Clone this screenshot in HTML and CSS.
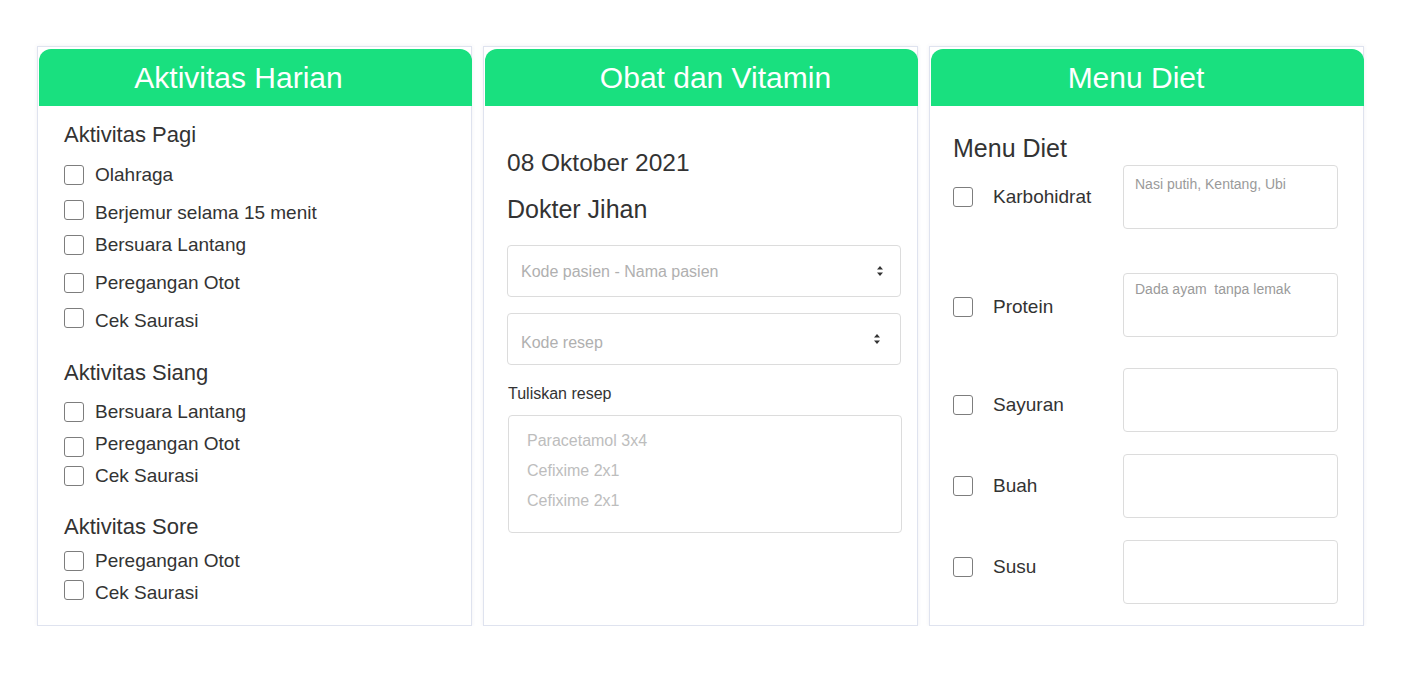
FILE: index.html
```html
<!DOCTYPE html>
<html lang="id">
<head>
<meta charset="utf-8">
<title>Dashboard</title>
<link rel="stylesheet" href="styles.css">
</head>
<body>
<main class="board">
  <section class="card">
    <h2 class="card-title title-left">Aktivitas Harian</h2>
    <div class="card-body body-activity">
      <h3 class="group-title first">Aktivitas Pagi</h3>
      <label class="item m9"><input type="checkbox" class="cb"><span>Olahraga</span></label>
      <label class="item m6"><input type="checkbox" class="cb cb-up"><span>Berjemur selama 15 menit</span></label>
      <label class="item"><input type="checkbox" class="cb"><span>Bersuara Lantang</span></label>
      <label class="item m6"><input type="checkbox" class="cb"><span>Peregangan Otot</span></label>
      <label class="item m6"><input type="checkbox" class="cb cb-up"><span>Cek Saurasi</span></label>

      <h3 class="group-title m21">Aktivitas Siang</h3>
      <label class="item m8"><input type="checkbox" class="cb"><span>Bersuara Lantang</span></label>
      <label class="item"><input type="checkbox" class="cb cb-down"><span>Peregangan Otot</span></label>
      <label class="item"><input type="checkbox" class="cb"><span>Cek Saurasi</span></label>

      <h3 class="group-title m20">Aktivitas Sore</h3>
      <label class="item m3"><input type="checkbox" class="cb"><span>Peregangan Otot</span></label>
      <label class="item"><input type="checkbox" class="cb cb-up"><span>Cek Saurasi</span></label>
    </div>
  </section>

  <section class="card">
    <h2 class="card-title title-mid">Obat dan Vitamin</h2>
    <div class="card-body body-med">
      <p class="date">08 Oktober 2021</p>
      <p class="doctor">Dokter Jihan</p>
      <div class="select first-select">
        <span class="ph">Kode pasien - Nama pasien</span>
        <svg class="arrows" width="8" height="12" viewBox="0 0 8 12"><path d="M4 1 L7 4.5 H1 Z M4 11 L7 7.5 H1 Z" fill="#333"/></svg>
      </div>
      <div class="select second-select">
        <span class="ph ph-low">Kode resep</span>
        <svg class="arrows" width="8" height="12" viewBox="0 0 8 12"><path d="M4 1 L7 4.5 H1 Z M4 11 L7 7.5 H1 Z" fill="#333"/></svg>
      </div>
      <div class="resep">
        <p class="resep-label">Tuliskan resep</p>
        <div class="textarea">
          <div>Paracetamol 3x4</div>
          <div>Cefixime 2x1</div>
          <div>Cefixime 2x1</div>
        </div>
      </div>
    </div>
  </section>

  <section class="card">
    <h2 class="card-title title-right">Menu Diet</h2>
    <div class="card-body body-diet">
      <p class="diet-title">Menu Diet</p>
      <div class="diet-row r1">
        <label class="diet-check"><input type="checkbox" class="cb"><span>Karbohidrat</span></label>
        <div class="diet-input">Nasi putih, Kentang, Ubi</div>
      </div>
      <div class="diet-row r2">
        <label class="diet-check shift-down-small"><input type="checkbox" class="cb"><span>Protein</span></label>
        <div class="diet-input tight">Dada ayam&nbsp; tanpa lemak</div>
      </div>
      <div class="diet-row r3">
        <label class="diet-check shift-down"><input type="checkbox" class="cb"><span>Sayuran</span></label>
        <div class="diet-input"></div>
      </div>
      <div class="diet-row r4">
        <label class="diet-check"><input type="checkbox" class="cb"><span>Buah</span></label>
        <div class="diet-input"></div>
      </div>
      <div class="diet-row r4">
        <label class="diet-check shift-up"><input type="checkbox" class="cb"><span>Susu</span></label>
        <div class="diet-input"></div>
      </div>
    </div>
  </section>
</main>
</body>
</html>
```

FILE: styles.css
```css
* { box-sizing: border-box; }

html, body {
  margin: 0;
  padding: 0;
  background: #ffffff;
  font-family: "Liberation Sans", Arial, sans-serif;
  color: #333333;
}

p, h2, h3 { margin: 0; font-weight: normal; }

.board {
  display: flex;
  gap: 11px;
  padding: 46px 0 0 37px;
}

.card {
  width: 435px;
  height: 580px;
  border: 1px solid #dfe3ef;
  background: #fff;
  box-shadow: 0 0 4px rgba(60, 70, 110, 0.08);
  display: flex;
  flex-direction: column;
}

.card-title {
  margin: 2px -1px 0 1px;
  height: 57px;
  line-height: 57px;
  background: #19e07f;
  color: #ffffff;
  font-size: 30px;
  text-align: center;
  border-radius: 12px 12px 0 0;
}
.title-left { padding-right: 34px; }
.title-mid { padding-left: 28px; }
.title-right { padding-right: 23px; }

/* ---------- Aktivitas ---------- */
.body-activity { padding-left: 26px; }

.group-title {
  font-size: 22px;
  line-height: 30px;
  color: #333;
}
.group-title.first { margin-top: 14px; }

.item {
  display: flex;
  align-items: center;
  height: 32px;
  font-size: 19px;
  color: #333;
}
.item span { margin-left: 11px; }

.m3 { margin-top: 3px; }
.m6 { margin-top: 6px; }
.m8 { margin-top: 8px; }
.m9 { margin-top: 9px; }
.m20 { margin-top: 20px; }
.m21 { margin-top: 21px; }

.cb {
  -webkit-appearance: none;
  appearance: none;
  width: 20px;
  height: 20px;
  margin: 0;
  border: 1px solid #7d7d7d;
  border-radius: 3px;
  background: #fff;
  flex: 0 0 auto;
}
.cb-up { margin-bottom: 6px; }
.cb-down { margin-top: 6px; }

/* ---------- Obat ---------- */
.body-med { padding-left: 23px; }

.date {
  margin-top: 42px;
  font-size: 24.5px;
  line-height: 30px;
}
.doctor {
  margin-top: 16px;
  font-size: 25px;
  line-height: 30px;
}

.select {
  width: 394px;
  height: 52px;
  border: 1px solid #dcdcdc;
  border-radius: 4px;
  display: flex;
  align-items: center;
  justify-content: space-between;
  padding: 2px 16px 0 13px;
  font-size: 16px;
}
.first-select { margin-top: 21px; }
.second-select { margin-top: 16px; padding-right: 19px; }
.ph { color: #b0b0b0; }
.ph-low { margin-top: 5px; }
.arrows { display: block; margin-top: -2px; }

.resep { margin-left: 1px; }
.resep-label {
  margin-top: 18px;
  padding-top: 1px;
  font-size: 16px;
  line-height: 20px;
  color: #333;
}
.textarea {
  margin-top: 11px;
  width: 394px;
  height: 118px;
  border: 1px solid #dcdcdc;
  border-radius: 4px;
  padding: 10px 18px;
  font-size: 16px;
  line-height: 30px;
  color: #bdbdbd;
}

/* ---------- Diet ---------- */
.body-diet { padding-left: 23px; }

.diet-title {
  margin-top: 27px;
  font-size: 25px;
  line-height: 30px;
}

.diet-row {
  display: flex;
  align-items: center;
}
.r1 { margin-top: 2px; }
.r2 { margin-top: 44px; }
.r3 { margin-top: 31px; }
.r4 { margin-top: 22px; }

.diet-check {
  width: 170px;
  display: flex;
  align-items: center;
  font-size: 19px;
  color: #333;
}
.diet-check span { margin-left: 20px; }
.shift-down-small { margin-top: 4px; }
.shift-down { margin-top: 10px; }
.shift-up { margin-bottom: 10px; }

.diet-input {
  width: 215px;
  height: 64px;
  border: 1px solid #dcdcdc;
  border-radius: 4px;
  padding: 8px 11px;
  font-size: 14px;
  line-height: 20px;
  color: #9a9a9a;
}
.diet-input.tight { padding-top: 5px; }
```
